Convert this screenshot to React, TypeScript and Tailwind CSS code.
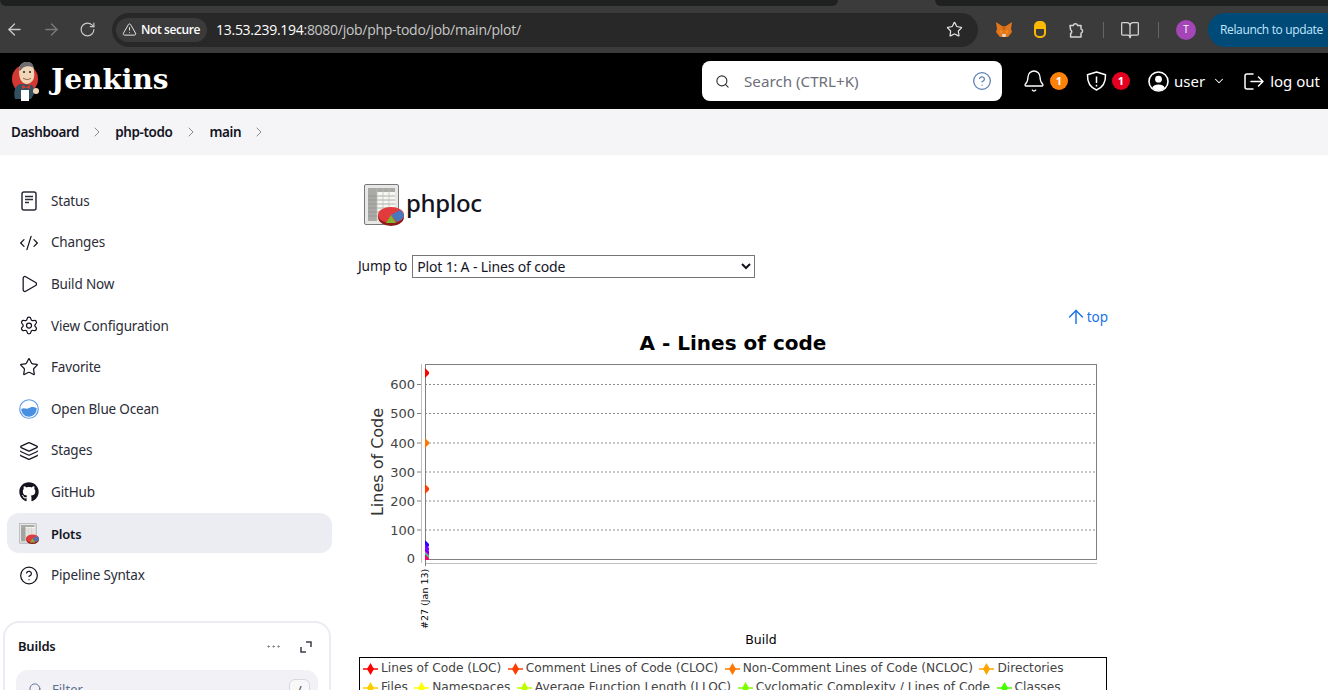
import {
  ArrowLeft,
  ArrowRight,
  ArrowUp,
  Bell,
  BookOpen,
  ChevronDown,
  ChevronRight,
  CircleHelp,
  CodeXml,
  Ellipsis,
  Layers,
  Play,
  RotateCw,
  Search,
  Settings,
  Star,
  TriangleAlert,
} from "lucide-react";
import { FaGithub } from "react-icons/fa";

function PlotIcon({ size }: { size: number }) {
  return (
    <svg width={(size * 40) / 44} height={size} viewBox="0 0 40 44" className="shrink-0">
      <rect x="0.5" y="0.5" width="34" height="40" rx="1.5" fill="#e8e8e6" stroke="#77787a" />
      <rect x="4" y="4" width="27" height="33" fill="#f6f6f2" />
      <rect x="4" y="4" width="9" height="33" fill="#a9a9a6" />
      <rect x="4" y="4" width="27" height="4" fill="#a9a9a6" />
      {[12, 16, 20, 24, 28, 32].map((y) => (
        <line key={y} x1="4" x2="31" y1={y} y2={y} stroke="#8f8f8c" strokeWidth="0.7" />
      ))}
      {[13, 19, 25].map((x) => (
        <line key={x} x1={x} x2={x} y1="4" y2="37" stroke="#bbbbb8" strokeWidth="0.7" />
      ))}
      <ellipse cx="27" cy="33" rx="13" ry="9" fill="#8f1a1a" />
      <ellipse cx="27" cy="31" rx="13" ry="8" fill="#e23b3b" />
      <path d="M27 31 L40 31 A13 8 0 0 0 36 26 L27 31Z" fill="#4a78bc" />
      <path d="M27 31 L40 31 C40 34 37 36 33 38 Z" fill="#4a78bc" />
      <path d="M27 31 L32 39 L22 39 Z" fill="#82b52f" />
    </svg>
  );
}

function JenkinsLogo() {
  return (
    <svg width="30" height="40" viewBox="0 0 30 40">
      <ellipse cx="14" cy="18" rx="13" ry="14" fill="#d33833" />
      <path d="M8 10 C8 3 12 1 16 1 C21 1 23 5 23 11 C24 17 22 22 16 23 C11 23 8 18 8 10Z" fill="#f0d6b7" />
      <path d="M8 10 C8 3 12 1 16 1 C20 1 22 3 23 7 C18 4 12 5 10 9 Z" fill="#6d6b6d" />
      <circle cx="13" cy="11" r="1" fill="#222" />
      <circle cx="19" cy="11" r="1" fill="#222" />
      <path d="M12 17 C15 19 18 19 20 17" stroke="#8a5a44" strokeWidth="1" fill="none" />
      <path d="M4 38 C2 30 4 24 10 23 L20 24 C24 26 23 30 23 33 L20 38Z" fill="#335061" />
      <path d="M11 24 L15 26 L19 24 L19 28 L15 26.5 L11 28Z" fill="#d33833" />
      <rect x="10" y="29" width="8" height="11" fill="#fff" />
      <circle cx="25" cy="30" r="3" fill="#f0d6b7" />
    </svg>
  );
}

function Fox() {
  return (
    <svg width="18" height="18" viewBox="0 0 18 18">
      <path d="M1 1 L7 5 L11 5 L17 1 L16 8 L17 11 L13 16 L5 16 L1 11 L2 8Z" fill="#e2761b" />
      <path d="M5 9 L8 10 L7 13 L5 12Z" fill="#f6851b" />
      <path d="M13 9 L10 10 L11 13 L13 12Z" fill="#f6851b" />
      <path d="M7 13 L11 13 L10.5 16 L7.5 16Z" fill="#e4d7c8" />
      <path d="M7 5 L11 5 L10 9 L8 9Z" fill="#c0651a" />
    </svg>
  );
}

function ExtensionIcon() {
  return (
    <svg width="18" height="18" viewBox="0 0 18 18" fill="none" stroke="#d5d5d5" strokeWidth="1.5" strokeLinejoin="round">
      <path d="M3 4.5h3.2a2.3 2.3 0 0 1 4.4 0H14v3.4a2.2 2.2 0 0 1 0 4.2V16H3.6v-3.5a2 2 0 0 0 0-3.6Z" />
    </svg>
  );
}

function StatusIcon() {
  return (
    <svg width="20" height="20" viewBox="0 0 20 20" fill="none" stroke="#2b2c38" strokeWidth="1.5">
      <rect x="3" y="1" width="14" height="18" rx="2" />
      <path d="M6 5.5h8M6 8.5h8M6 11.5h4" />
    </svg>
  );
}

function BlueOcean() {
  return (
    <svg width="22" height="22" viewBox="0 0 22 22">
      <circle cx="11" cy="11" r="10.2" fill="#fff" stroke="#5b9be8" strokeWidth="1.3" />
      <path d="M2.5 11 C6 9 8 12 11 10 C14 8 16 8.5 19.5 10 C19.5 16 15.5 19.5 11 19.5 C6.5 19.5 2.5 16 2.5 11Z" fill="#4a90e2" />
    </svg>
  );
}

function UserIcon() {
  return (
    <svg width="21" height="21" viewBox="0 0 21 21">
      <circle cx="10.5" cy="10.5" r="9.5" fill="none" stroke="#fff" strokeWidth="1.6" />
      <circle cx="10.5" cy="8.2" r="3.4" fill="#fff" />
      <path d="M4.2 16.5 C6 12.6 15 12.6 16.8 16.5 C15 18.8 13 19.6 10.5 19.6 C8 19.6 6 18.8 4.2 16.5Z" fill="#fff" />
    </svg>
  );
}

function ShieldIcon() {
  return (
    <svg width="21" height="20" viewBox="0 0 21 20" fill="none" stroke="#fff" strokeWidth="1.5" className="shrink-0">
      <path d="M10.5 1 L19.5 3.8 C19.8 11.5 16 16.8 10.5 19 C5 16.8 1.2 11.5 1.5 3.8Z" strokeLinejoin="round" />
      <path d="M10.5 5.5v6.5M10.5 13.8v1.7" />
    </svg>
  );
}

function LogoutIcon() {
  return (
    <svg width="20" height="17" viewBox="0 0 20 17" fill="none" stroke="#fff" strokeWidth="1.5" strokeLinecap="round" strokeLinejoin="round" className="shrink-0">
      <path d="M9 1H3a2 2 0 0 0-2 2v11a2 2 0 0 0 2 2h6" />
      <path d="M7 8.5h12M14.5 4l4.5 4.5-4.5 4.5" />
    </svg>
  );
}

const sideItems = [
  { label: "Status", icon: <StatusIcon /> },
  { label: "Changes", icon: <CodeXml size={24} strokeWidth={1.5} /> },
  { label: "Build Now", icon: <Play size={22} strokeWidth={1.5} /> },
  { label: "View Configuration", icon: <Settings size={23} strokeWidth={1.5} /> },
  { label: "Favorite", icon: <Star size={24} strokeWidth={1.5} /> },
  { label: "Open Blue Ocean", icon: <BlueOcean /> },
  { label: "Stages", icon: <Layers size={22} strokeWidth={1.5} /> },
  { label: "GitHub", icon: <FaGithub size={20} color="#14141f" /> },
  { label: "Plots", icon: <PlotIcon size={22} />, active: true },
  { label: "Pipeline Syntax", icon: <CircleHelp size={23} strokeWidth={1.5} /> },
];

const legendItems = [
  { label: "Lines of Code (LOC)", color: "#ff0000" },
  { label: "Comment Lines of Code (CLOC)", color: "#ff3c00" },
  { label: "Non-Comment Lines of Code (NCLOC)", color: "#ff7700" },
  { label: "Directories", color: "#ffa500" },
  { label: "Files", color: "#ffcc00" },
  { label: "Namespaces", color: "#ffff00" },
  { label: "Average Function Length (LLOC)", color: "#bbff00" },
  { label: "Cyclomatic Complexity / Lines of Code", color: "#80ff00" },
  { label: "Classes", color: "#44ff00" },
];

const ticks = [
  { label: "600", y: 54 },
  { label: "500", y: 83 },
  { label: "400", y: 112.5 },
  { label: "300", y: 141.5 },
  { label: "200", y: 170.5 },
  { label: "100", y: 199.5 },
];

const points = [
  { y: 43, c: "#ff0000" },
  { y: 113, c: "#ff7700" },
  { y: 159, c: "#ff3c00" },
  { y: 215, c: "#3300ff" },
  { y: 219, c: "#7700ff" },
  { y: 222, c: "#9900ff" },
  { y: 224, c: "#0000ff" },
  { y: 225, c: "#ff00cc" },
  { y: 227, c: "#00ff88" },
  { y: 229, c: "#ff0066" },
];

// x/y here are relative to the svg, which starts at page (358, 330)
function Chart() {
  return (
    <svg width="750" height="327" viewBox="0 0 750 327" className="block" fontFamily="'DejaVu Sans', sans-serif">
      <defs>
        <clipPath id="plot-area">
          <rect x="67" y="34" width="672" height="196" />
        </clipPath>
      </defs>
      <text x="375" y="20" textAnchor="middle" fontSize="20" fontWeight="700" fill="#000">
        A - Lines of code
      </text>
      <line x1="63.5" x2="63.5" y1="34" y2="233" stroke="#c0c0c0" />
      <line x1="67" x2="739" y1="233.5" y2="233.5" stroke="#c0c0c0" />
      <line x1="67.5" x2="67.5" y1="230" y2="236" stroke="#808080" />
      {ticks.map((t) => (
        <g key={t.label}>
          <line x1="67" x2="739" y1={t.y + 0.5} y2={t.y + 0.5} stroke="#8c8c8c" strokeDasharray="2 2" />
          <line x1="59" x2="63" y1={t.y + 0.5} y2={t.y + 0.5} stroke="#808080" />
          <text x="57" y={t.y + 5} textAnchor="end" fontSize="13" fill="#444">
            {t.label}
          </text>
        </g>
      ))}
      <text x="57" y="233" textAnchor="end" fontSize="13" fill="#444">
        0
      </text>
      <rect x="67.5" y="34.5" width="671" height="195" fill="none" stroke="#808080" />
      <g clipPath="url(#plot-area)">
        {points.map((p, i) => (
          <path key={i} d={`M67 ${p.y - 5} L71 ${p.y - 1} L71 ${p.y + 1} L67 ${p.y + 5} Z`} fill={p.c} />
        ))}
      </g>
      <text x="25" y="132" transform="rotate(-90 25 132)" textAnchor="middle" fontSize="16" fill="#333">
        Lines of Code
      </text>
      <text x="70" y="299" transform="rotate(-90 70 299)" fontSize="9.5" fill="#000">
        #27 (Jan 13)
      </text>
      <text x="403" y="314" textAnchor="middle" fontSize="12.5" fill="#000">
        Build
      </text>
    </svg>
  );
}

function LegendMarker({ color }: { color: string }) {
  return (
    <svg width="15" height="12" viewBox="0 0 15 12" className="shrink-0">
      <line x1="0" x2="15" y1="6" y2="6" stroke={color} strokeWidth="1.5" />
      <path d="M7.5 0 L11 6 L7.5 12 L4 6Z" fill={color} />
    </svg>
  );
}

export default function App() {
  return (
    <div className="h-[690px] overflow-hidden bg-white text-[#14141f] font-['Noto_Sans','Open_Sans',sans-serif]">
      {/* browser tabs */}
      <div className="h-[6px] bg-[#3b3b3b] flex justify-between">
        <div className="w-[838px] bg-[#1f2020] rounded-b-lg" />
        <div className="w-[393px] bg-[#1f2020] rounded-bl-lg" />
      </div>

      {/* browser toolbar */}
      <div className="h-[47px] bg-[#3b3b3b] flex items-center">
        <div className="flex items-center gap-[18px] pl-[5px] w-[112px] text-[#c7c7c7]">
          <ArrowLeft size={19} strokeWidth={1.7} />
          <ArrowRight size={19} strokeWidth={1.7} className="text-[#7a7a7a]" />
          <RotateCw size={17} strokeWidth={1.7} />
        </div>
        <div className="w-[866px] h-[34px] rounded-full bg-[#282828] flex items-center pl-[4px] pr-[15px]">
          <div className="h-[24px] pl-[6px] pr-[7px] rounded-full bg-[#3b3b3b] flex items-center gap-[4px] text-white text-[12px] font-semibold font-['Open_Sans',sans-serif] tracking-[-0.4px]">
            <TriangleAlert size={15} strokeWidth={1.6} className="text-[#e3e3e3]" />
            <span>Not secure</span>
          </div>
          <div className="ml-[9px] text-[14px] tracking-[-0.28px] text-[#c7c7c7] font-['Open_Sans',sans-serif]">
            <span className="text-white">13.53.239.194</span>:8080/job/php-todo/job/main/plot/
          </div>
          <Star size={17} strokeWidth={1.7} className="ml-auto text-[#e3e3e3]" />
        </div>
        <div className="flex items-center pl-[17px] flex-1">
          <Fox />
          <div className="ml-[21px] w-[12px] h-[17px] rounded-[5px] border-2 border-[#fbb900] flex flex-col">
            <div className="h-[6px] bg-[#fbb900]" />
          </div>
          <div className="ml-[21px]">
            <ExtensionIcon />
          </div>
          <div className="ml-[18px] w-px h-[16px] bg-[#666]" />
          <BookOpen size={20} strokeWidth={1.5} className="ml-[16px] text-[#d5d5d5]" />
          <div className="ml-[18px] w-px h-[16px] bg-[#666]" />
          <div className="ml-[17px] w-[20px] h-[20px] rounded-full bg-[#a445b8] flex items-center justify-center text-white text-[10px] font-['Open_Sans',sans-serif]">
            T
          </div>
          <div className="ml-[12px] h-[34px] flex-1 rounded-l-full bg-[#004a77] flex items-center pl-[12px] text-[12px] text-[#c2e7ff] whitespace-nowrap font-['Open_Sans',sans-serif] tracking-[-0.35px]">
            Relaunch to update
          </div>
        </div>
      </div>

      {/* jenkins header */}
      <header className="h-[56px] bg-black flex items-center text-white">
        <div className="pl-[11px] w-[51px]">
          <JenkinsLogo />
        </div>
        <div className="w-[117px] font-['DejaVu_Serif',serif] font-bold text-[28px] leading-none -mt-[2px] whitespace-nowrap">Jenkins</div>
        <div className="ml-[534px] w-[300px] h-[40px] rounded-lg bg-white flex items-center pl-[13px] pr-[10px] text-[#6d6f7a]">
          <Search size={15} strokeWidth={1.8} className="text-[#333]" />
          <span className="ml-[14px] text-[15.2px]">Search (CTRL+K)</span>
          <CircleHelp size={20} strokeWidth={1.5} className="ml-auto text-[#5a7fb0]" />
        </div>
        <Bell size={24} strokeWidth={1.3} className="ml-[20px]" />
        <div className="ml-[4px] w-[18px] h-[18px] rounded-full bg-[#fe820a] flex items-center justify-center text-[11px] font-bold">1</div>
        <div className="ml-[17.5px]">
          <ShieldIcon />
        </div>
        <div className="ml-[5.5px] w-[18px] h-[18px] rounded-full bg-[#e6001f] flex items-center justify-center text-[11px] font-bold">1</div>
        <div className="ml-[17.5px]">
          <UserIcon />
        </div>
        <span className="ml-[5.5px] text-[15px]">user</span>
        <ChevronDown size={14} strokeWidth={1.8} className="ml-[7px]" />
        <div className="ml-[18px]">
          <LogoutIcon />
        </div>
        <span className="ml-[6px] text-[15px] whitespace-nowrap">log out</span>
      </header>

      {/* breadcrumb */}
      <nav className="h-[46px] bg-[#f5f5f8] flex items-center pl-[11px] text-[13.5px] font-semibold tracking-[-0.4px]">
        <span>Dashboard</span>
        <ChevronRight size={16} strokeWidth={1.5} className="ml-[10px] text-[#8a8a94]" />
        <span className="ml-[10px]">php-todo</span>
        <ChevronRight size={16} strokeWidth={1.5} className="ml-[11px] text-[#8a8a94]" />
        <span className="ml-[10px]">main</span>
        <ChevronRight size={16} strokeWidth={1.5} className="ml-[10px] text-[#8a8a94]" />
      </nav>

      <div className="flex">
        {/* sidebar */}
        <aside className="w-[358px] shrink-0 pl-[3px] pt-[25.5px]">
          <div className="flex flex-col gap-[1.6px] pl-[4px] w-[329px]">
            {sideItems.map((item) => (
              <div
                key={item.label}
                className={
                  item.active
                    ? "h-10 rounded-xl bg-[#ecedf2] flex items-center pl-[12px] pt-[2px] text-[13px] font-semibold tracking-[-0.2px]"
                    : "h-10 rounded-xl flex items-center pl-[12px] pt-[1px] text-[13.5px] text-[#2b2c38] tracking-[-0.17px]"
                }
              >
                <span className="w-[20px] h-[22px] flex items-center justify-center text-[#14141f]">{item.icon}</span>
                <span className="ml-[12px]">{item.label}</span>
              </div>
            ))}
          </div>
          <div className="mt-[26px] w-[328px] h-[200px] rounded-2xl border-2 border-[#ebebf3] px-[13px] pt-[14px]">
            <div className="flex items-center h-[20px]">
              <span className="text-[13px] font-semibold tracking-[-0.2px]">Builds</span>
              <Ellipsis size={17} strokeWidth={1.2} className="ml-auto text-[#6d6f7a]" />
              <svg width="12" height="12" viewBox="0 0 12 12" fill="none" stroke="#3b3d48" strokeWidth="1.5" className="ml-[18px] mr-[4px]">
                <path d="M1 6v5h5M6 1h5v5" />
              </svg>
            </div>
            <div className="mt-[13px] h-[40px] -mx-[2px] rounded-xl bg-[#f1f1f6] flex items-center pl-[12px] pr-[8px] text-[13px] text-[#5b6f8f]">
              <Search size={15} strokeWidth={1.5} />
              <span className="ml-[9px]">Filter</span>
              <span className="ml-auto w-[21px] h-[22px] rounded-md border border-[#d8d8e0] bg-[#f8f8fb] flex items-center justify-center text-[11px] text-[#333]">/</span>
            </div>
          </div>
        </aside>

        {/* main */}
        <main className="w-[750px]">
          <div className="pt-[29px] pl-[6px] flex items-center">
            <PlotIcon size={44} />
            <h1 className="text-[24px] leading-[36px] font-medium ml-[2px] -mt-[7px] tracking-[-0.35px]">phploc</h1>
          </div>
          <div className="mt-[27px] flex items-center h-[23px] text-[13.7px] tracking-[-0.15px]">
            <span>Jump to</span>
            <select className="ml-[5px] w-[343px] h-[23px] border border-[#767676] bg-white text-[14px] font-['Noto_Sans',sans-serif]">
              <option>Plot 1: A - Lines of code</option>
            </select>
          </div>
          <div className="mt-[28px] h-[22px] flex items-center justify-end text-[#1a73e8] text-[13.5px]">
            <ArrowUp size={22} strokeWidth={1.6} />
            <span>top</span>
          </div>
          <div className="pt-[2px]">
            <Chart />
          </div>
          <div className="mx-[1px] border border-black pl-[3px] pt-[1px] h-[120px] font-['DejaVu_Sans',sans-serif] text-[12.2px] text-[#444] leading-[19px] flex flex-wrap content-start gap-x-[6.5px]">
            {legendItems.map((l) => (
              <span key={l.label} className="flex items-center gap-[3px] whitespace-nowrap">
                <LegendMarker color={l.color} />
                {l.label}
              </span>
            ))}
          </div>
        </main>
      </div>
    </div>
  );
}
